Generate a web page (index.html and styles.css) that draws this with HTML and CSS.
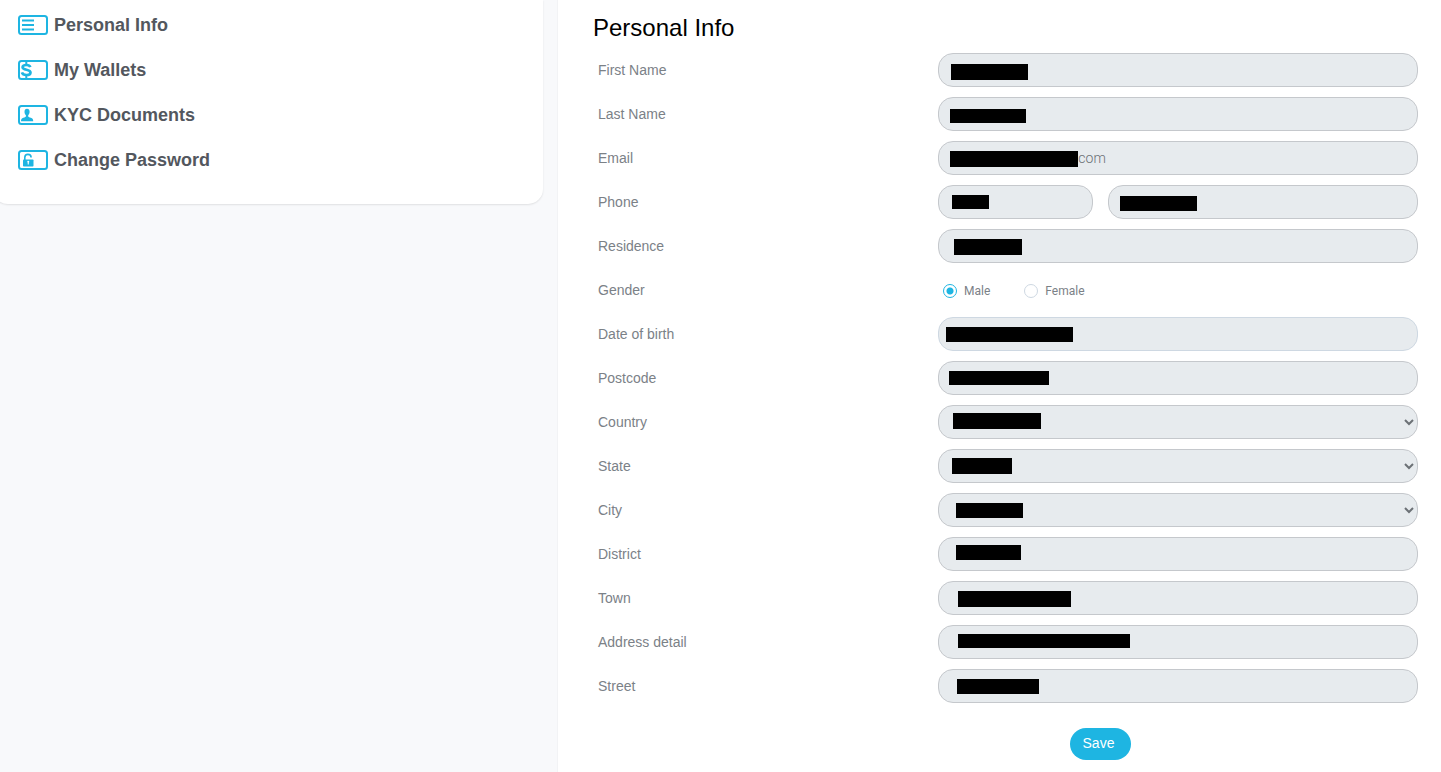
FILE: index.html
```html
<!DOCTYPE html>
<html lang="en">
<head>
<meta charset="utf-8">
<meta name="viewport" content="width=device-width, initial-scale=1">
<title>Personal Info</title>
<link rel="stylesheet" href="styles.css">
</head>
<body>
<div class="page">
  <aside class="sidebar">
    <nav class="menu">
      <a class="menu-item" href="#info">
        <svg class="menu-icon" viewBox="0 0 30 20" aria-hidden="true"><rect class="frame" x="1" y="1" width="28" height="18" rx="2.5"/><path class="line" d="M4 5.500h12M4 10h12M4 14.500h12"/></svg>
        Personal Info
      </a>
      <a class="menu-item" href="#wallets">
        <svg class="menu-icon" viewBox="0 0 30 20" aria-hidden="true"><rect class="frame" x="1" y="1" width="28" height="18" rx="2.5"/><path class="dollar" d="M12.300 7.200C11.800 5.600 10.400 5 8.300 5 6 5 4.600 5.800 4.600 7.200 4.600 10.700 12.500 8.700 12.500 12.400 12.500 14 11 15 8.400 15 5.900 15 4.400 14.100 3.900 12.400"/><path class="dollar-bar" d="M8.300 2v3M8.300 15v3"/></svg>
        My Wallets
      </a>
      <a class="menu-item" href="#kyc">
        <svg class="menu-icon" viewBox="0 0 30 20" aria-hidden="true"><rect class="frame" x="1" y="1" width="28" height="18" rx="2.5"/><path class="solid" d="M9 3.800c1.700 0 2.600 1.200 2.600 3 0 1.500-.6 2.800-1.400 3.500v1.200c.5.800 2.500 1.100 3.700 1.700 1 .5 1.300 1.500 1.300 3.100H3c0-1.600.3-2.600 1.300-3.100 1.200-.6 3.100-.9 3.600-1.700v-1.200C7 9.600 6.500 8.300 6.500 6.800c0-1.800.9-3 2.500-3z"/></svg>
        KYC Documents
      </a>
      <a class="menu-item" href="#password">
        <svg class="menu-icon" viewBox="0 0 30 20" aria-hidden="true"><rect class="frame" x="1" y="1" width="28" height="18" rx="2.5"/><path class="shackle" d="M6.800 10V7.400C6.800 5.600 8.200 4.400 9.900 4.400s3.200 1.200 3.200 3"/><rect class="solid" x="5" y="9.500" width="10.500" height="7" rx=".8"/><path class="keyhole" d="M9.300 12a1 1 0 1 1 1.500.6V14.500H9.700v-1.900a1 1 0 0 1-.4-.6z"/></svg>
        Change Password
      </a>
    </nav>
  </aside>

  <main class="content">
    <h1 class="title">Personal Info</h1>
    <form class="form">
      <div class="row">
        <label class="label" for="first">First Name</label>
        <div class="field"><input class="control" id="first" type="text" readonly><span class="mask mask-first"></span></div>
      </div>
      <div class="row">
        <label class="label" for="last">Last Name</label>
        <div class="field"><input class="control" id="last" type="text" readonly><span class="mask mask-last"></span></div>
      </div>
      <div class="row">
        <label class="label" for="email">Email</label>
        <div class="field"><input class="control control-email" id="email" type="text" value=".com" readonly><span class="mask mask-email"></span></div>
      </div>
      <div class="row">
        <label class="label" for="phone">Phone</label>
        <div class="phone">
          <div class="field"><input class="control" type="text" aria-label="Country code" readonly><span class="mask mask-code"></span></div>
          <div class="field"><input class="control" id="phone" type="text" readonly><span class="mask mask-phone"></span></div>
        </div>
      </div>
      <div class="row">
        <label class="label" for="residence">Residence</label>
        <div class="field"><input class="control" id="residence" type="text" readonly><span class="mask mask-residence"></span></div>
      </div>
      <div class="row" role="radiogroup" aria-labelledby="gender">
        <span class="label" id="gender">Gender</span>
        <div class="radios">
          <label class="radio"><input class="radio-input" type="radio" name="gender" checked>Male</label>
          <label class="radio"><input class="radio-input" type="radio" name="gender">Female</label>
        </div>
      </div>
      <div class="row">
        <label class="label" for="birth">Date of birth</label>
        <div class="field"><input class="control control-date" id="birth" type="text" readonly><span class="mask mask-birth"></span></div>
      </div>
      <div class="row">
        <label class="label" for="postcode">Postcode</label>
        <div class="field"><input class="control" id="postcode" type="text" readonly><span class="mask mask-postcode"></span></div>
      </div>
      <div class="row">
        <label class="label" for="country">Country</label>
        <div class="field"><select class="control" id="country"><option></option></select><span class="mask mask-country"></span></div>
      </div>
      <div class="row">
        <label class="label" for="state">State</label>
        <div class="field"><select class="control" id="state"><option></option></select><span class="mask mask-state"></span></div>
      </div>
      <div class="row">
        <label class="label" for="city">City</label>
        <div class="field"><select class="control" id="city"><option></option></select><span class="mask mask-city"></span></div>
      </div>
      <div class="row">
        <label class="label" for="district">District</label>
        <div class="field"><input class="control" id="district" type="text" readonly><span class="mask mask-district"></span></div>
      </div>
      <div class="row">
        <label class="label" for="town">Town</label>
        <div class="field"><input class="control" id="town" type="text" readonly><span class="mask mask-town"></span></div>
      </div>
      <div class="row">
        <label class="label" for="address">Address detail</label>
        <div class="field"><input class="control" id="address" type="text" readonly><span class="mask mask-address"></span></div>
      </div>
      <div class="row">
        <label class="label" for="street">Street</label>
        <div class="field"><input class="control" id="street" type="text" readonly><span class="mask mask-street"></span></div>
      </div>
      <div class="actions"><button class="save" type="button">Save</button></div>
    </form>
  </main>
</div>
</body>
</html>
```

FILE: styles.css
```css
* { box-sizing: border-box; }

body {
  margin: 0;
  background: #fff;
  color: #7b8187;
  font: 14px/20px "Liberation Sans", Arial, sans-serif;
}

.page {
  display: grid;
  grid-template-columns: 558fr 883fr;
  min-height: 100vh;
  overflow-x: hidden;
}

.sidebar {
  padding-right: 14px;
  background: #f8f9fb;
  border-right: 1px solid #f2f3f5;
}

.menu {
  display: flex;
  flex-direction: column;
  gap: 25px;
  margin-left: -7px;
  padding: 15px 18px 34px 25px;
  background: #fff;
  border-radius: 0 0 15px 15px;
  box-shadow: 0 1px 2px rgba(0, 0, 0, 0.1);
}

.menu-item {
  display: flex;
  align-items: center;
  gap: 6px;
  color: #53575e;
  font-size: 18px;
  font-weight: bold;
  text-decoration: none;
}

.menu-icon { width: 30px; height: 20px; fill: none; }
.frame { stroke: #1eb5e2; stroke-width: 2; }
.line { stroke: #1eb5e2; stroke-width: 2; }
.dollar { stroke: #1eb5e2; stroke-width: 2.7; }
.dollar-bar { stroke: #1eb5e2; stroke-width: 2; }
.shackle { stroke: #1eb5e2; stroke-width: 1.6; }
.solid { fill: #1eb5e2; }
.keyhole { fill: #fff; }

.content { padding: 13px 23px 12px 35px; }

.title {
  margin: 0;
  color: #000;
  font-size: 24px;
  font-weight: normal;
  line-height: 30px;
}

.form {
  display: flex;
  flex-direction: column;
  gap: 10px;
  padding: 10px 0 0 5px;
}

.row {
  display: grid;
  grid-template-columns: 17fr 24fr;
  align-items: center;
  min-height: 34px;
}

.field { position: relative; }

.phone {
  display: grid;
  grid-template-columns: 1fr 2fr;
  gap: 15px;
}

.control {
  display: block;
  width: 100%;
  height: 34px;
  padding: 0 12px;
  background-color: #e7ebee;
  border: 1px solid #c5c8cc;
  border-radius: 15px;
  color: #6c7176;
  font: 14px/20px Roboto, sans-serif;
}

.control-email { padding-left: 136px; font-weight: 300; }
.control-date { border-color: #ced8e2; }

select.control { padding: 0 1px 0 0; }

.mask {
  position: absolute;
  background: #000;
  pointer-events: none;
}

.mask-first { left: 13px; top: 11px; width: 77px; height: 16px; }
.mask-last { left: 12px; top: 12px; width: 76px; height: 14px; }
.mask-email { left: 12px; top: 10px; width: 128px; height: 16px; }
.mask-code { left: 14px; top: 10px; width: 37px; height: 14px; }
.mask-phone { left: 12px; top: 11px; width: 77px; height: 15px; }
.mask-residence { left: 16px; top: 10px; width: 68px; height: 16px; }
.mask-birth { left: 8px; top: 10px; width: 127px; height: 15px; }
.mask-postcode { left: 11px; top: 10px; width: 100px; height: 14px; }
.mask-country { left: 15px; top: 8px; width: 88px; height: 16px; }
.mask-state { left: 14px; top: 9px; width: 60px; height: 16px; }
.mask-city { left: 18px; top: 10px; width: 67px; height: 15px; }
.mask-district { left: 18px; top: 8px; width: 65px; height: 15px; }
.mask-town { left: 20px; top: 10px; width: 113px; height: 16px; }
.mask-address { left: 20px; top: 9px; width: 172px; height: 14px; }
.mask-street { left: 19px; top: 10px; width: 82px; height: 15px; }

.radios {
  display: flex;
  gap: 34px;
  padding: 1px 5px 0;
}

.radio {
  display: flex;
  align-items: center;
  gap: 7px;
  font: 12px/20px Roboto, sans-serif;
}

.radio-input {
  appearance: none;
  width: 14px;
  height: 14px;
  margin: 0;
  border: 1px solid #ced8e2;
  border-radius: 50%;
}

.radio-input:checked {
  border-color: #1eb5e2;
  background: radial-gradient(circle, #1eb5e2 3px, #fff 4px);
}

.actions {
  display: flex;
  justify-content: center;
  padding: 15px 0 0 185px;
}

.save {
  height: 32px;
  padding: 0 17px 2px 13px;
  background: #1eb5e2;
  border: 0;
  border-radius: 16px;
  color: #fff;
  font: 14px/20px "Liberation Sans", Arial, sans-serif;
}
```
